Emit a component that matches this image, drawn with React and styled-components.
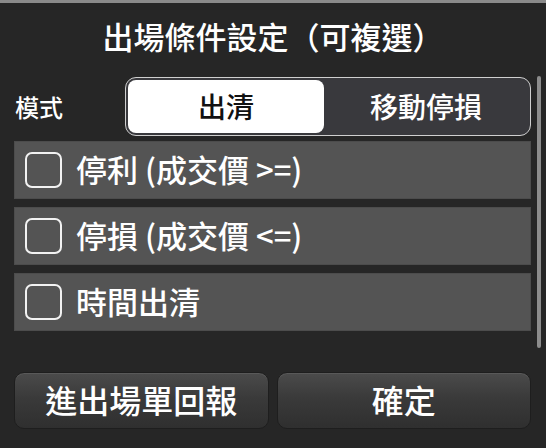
import React, { useState } from 'react';
import styled, { createGlobalStyle } from 'styled-components';

const GlobalStyle = createGlobalStyle`
  html, body {
    margin: 0;
    padding: 0;
    background: #262626;
    overflow: hidden;
  }
  body {
    font-family: "Noto Sans CJK TC", "Noto Sans", sans-serif;
    color: #fff;
  }
`;

const Screen = styled.div`
  position: relative;
  width: 546px;
  height: 448px;
  background: #262626;
  border-top: 3px solid #8a8a8a;
  box-sizing: border-box;
`;

const Title = styled.h1`
  margin: 0;
  height: 71px;
  display: flex;
  align-items: center;
  justify-content: center;
  padding-bottom: 6px;
  box-sizing: border-box;
  font-size: 31px;
  font-weight: 500;
`;

const Body = styled.div`
  padding: 3px 15px 0 14px;
  display: flex;
  flex-direction: column;
`;

const ModeRow = styled.div`
  display: flex;
  align-items: center;
  height: 59px;
`;

const ModeLabel = styled.span`
  width: 110px;
  padding-left: 1px;
  font-size: 24px;
  font-weight: 500;
`;

const Segmented = styled.div`
  flex: 1;
  height: 100%;
  display: flex;
  padding: 2px;
  box-sizing: border-box;
  border: 1.5px solid #cfcfcf;
  border-radius: 11px;
  background: #39393d;
`;

const Segment = styled.button`
  flex: ${p => (p.$active ? '0 0 196px' : '1')};
  border: none;
  border-radius: 8px;
  background: ${p => (p.$active ? '#fff' : 'transparent')};
  color: ${p => (p.$active ? '#111' : '#fff')};
  font-family: inherit;
  font-size: 28px;
  font-weight: 500;
  padding: 0 0 2px;
  cursor: pointer;
`;

const Options = styled.div`
  margin-top: 5px;
  display: flex;
  flex-direction: column;
  gap: 8px;
`;

const OptionRow = styled.label`
  display: flex;
  align-items: center;
  height: 58px;
  padding-left: 11px;
  background: #545454;
  box-shadow: inset 0 0 0 1px #4c4c4c;
  cursor: pointer;
`;

const Box = styled.span`
  width: 37px;
  height: 36px;
  box-sizing: border-box;
  border: 2.5px solid #f2f2f2;
  border-radius: 7px;
  margin-right: 14px;
  display: flex;
  align-items: center;
  justify-content: center;
  font-size: 24px;
  line-height: 1;
`;

const OptionText = styled.span`
  font-size: 31px;
  font-weight: 500;
  padding-bottom: 3px;
`;

const Footer = styled.div`
  margin-top: 41px;
  display: grid;
  grid-template-columns: 1fr 1fr;
  gap: 8px;
`;

const ActionButton = styled.button`
  height: 57px;
  border: 1px solid #1e1e1e;
  border-radius: 10px;
  background: linear-gradient(#4b4b4b, #3a3a3a 45%, #2f2f2f);
  box-shadow: inset 0 1px 0 rgba(255, 255, 255, 0.08);
  color: #fff;
  font-family: inherit;
  font-size: 32px;
  font-weight: 500;
  padding: 0 0 3px;
  cursor: pointer;
`;

const ScrollThumb = styled.div`
  position: absolute;
  left: 537px;
  top: 73px;
  width: 4px;
  height: 272px;
  border-radius: 2px;
  background: #8c8c8c;
`;

const options = ['停利 (成交價 >=)', '停損 (成交價 <=)', '時間出清'];

export default function App() {
  const [mode, setMode] = useState(0);
  const [checked, setChecked] = useState([false, false, false]);

  const toggle = i => setChecked(c => c.map((v, j) => (j === i ? !v : v)));

  return (
    <Screen>
      <GlobalStyle />
      <Title>出場條件設定（可複選）</Title>
      <Body>
        <ModeRow>
          <ModeLabel>模式</ModeLabel>
          <Segmented>
            <Segment $active={mode === 0} onClick={() => setMode(0)}>出清</Segment>
            <Segment $active={mode === 1} onClick={() => setMode(1)}>移動停損</Segment>
          </Segmented>
        </ModeRow>
        <Options>
          {options.map((text, i) => (
            <OptionRow key={text} onClick={() => toggle(i)}>
              <Box>{checked[i] ? '✓' : ''}</Box>
              <OptionText>{text}</OptionText>
            </OptionRow>
          ))}
        </Options>
        <Footer>
          <ActionButton>進出場單回報</ActionButton>
          <ActionButton>確定</ActionButton>
        </Footer>
      </Body>
      <ScrollThumb />
    </Screen>
  );
}
